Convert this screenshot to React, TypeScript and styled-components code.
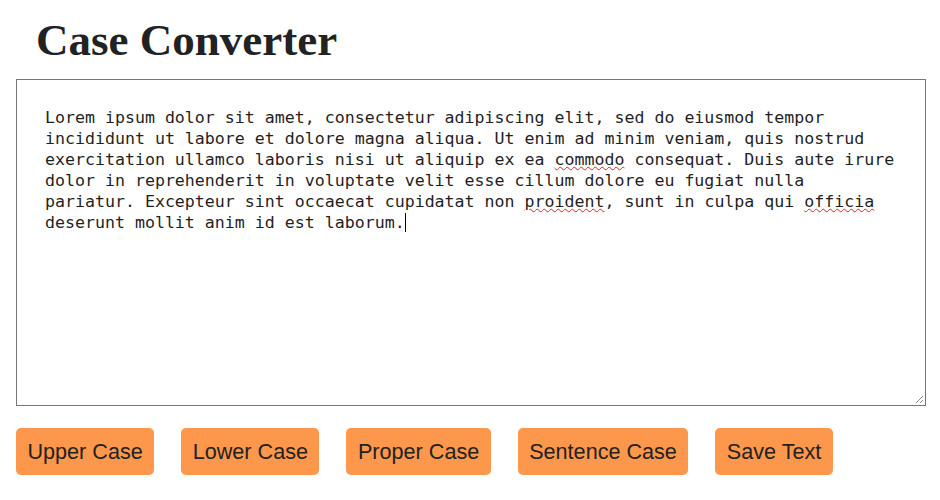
import React from "react";
import styled, { createGlobalStyle } from "styled-components";

const Global = createGlobalStyle`
  html, body { margin: 0; padding: 0; background: #fff; }
  body { padding: 8px 16px; }
`;

const Page = styled.main`
  display: flex;
  flex-direction: column;
`;

const Title = styled.h1`
  margin: 0 0 0 20px;
  font-family: "Liberation Serif", "Times New Roman", serif;
  font-weight: 700;
  font-size: 45px;
  line-height: 64px;
  color: #222;
`;

const Editor = styled.div`
  position: relative;
  box-sizing: border-box;
  margin-top: 7px;
  width: 910px;
  height: 327px;
  border: 1px solid #767676;
  padding: 27px 28px;
  font-family: "DejaVu Sans Mono", "Liberation Mono", monospace;
  font-size: 16.6px;
  line-height: 21px;
  color: #1f1f1f;
  white-space: pre-wrap;
  outline: none;
`;

const Misspelled = styled.span`
  text-decoration: underline wavy #e02020;
  text-decoration-thickness: 1px;
  text-underline-offset: 1px;
`;

const Caret = styled.span`
  display: inline-block;
  width: 0;
  height: 19px;
  border-left: 1.5px solid #000;
  vertical-align: -4px;
`;

const Grip = styled.svg`
  position: absolute;
  right: 1px;
  bottom: 1px;
  width: 10px;
  height: 10px;
`;

const Toolbar = styled.div`
  display: flex;
  gap: 27px;
  margin-top: 22px;
`;

const Button = styled.button`
  height: 47px;
  padding: 0 11.5px;
  border: none;
  border-radius: 5px;
  background: #fd974b;
  color: #222;
  font-family: "Liberation Sans", Arial, sans-serif;
  font-size: 21.6px;
  cursor: pointer;
`;

export default function App() {
  return (
    <>
      <Global />
      <Page>
        <Title>Case Converter</Title>
        <Editor contentEditable suppressContentEditableWarning spellCheck>
          {"Lorem ipsum dolor sit amet, consectetur adipiscing elit, sed do eiusmod tempor\nincididunt ut labore et dolore magna aliqua. Ut enim ad minim veniam, quis nostrud\nexercitation ullamco laboris nisi ut aliquip ex ea "}
          <Misspelled>commodo</Misspelled>
          {" consequat. Duis aute irure\ndolor in reprehenderit in voluptate velit esse cillum dolore eu fugiat nulla\npariatur. Excepteur sint occaecat cupidatat non "}
          <Misspelled>proident</Misspelled>
          {", sunt in culpa qui "}
          <Misspelled>officia</Misspelled>
          {"\ndeserunt mollit anim id est laborum."}
          <Caret />
          <Grip viewBox="0 0 10 10">
            <line x1="9" y1="2" x2="2" y2="9" stroke="#8a8a8a" strokeWidth="1" />
            <line x1="9" y1="6" x2="6" y2="9" stroke="#8a8a8a" strokeWidth="1" />
          </Grip>
        </Editor>
        <Toolbar>
          <Button>Upper Case</Button>
          <Button>Lower Case</Button>
          <Button>Proper Case</Button>
          <Button>Sentence Case</Button>
          <Button>Save Text</Button>
        </Toolbar>
      </Page>
    </>
  );
}
